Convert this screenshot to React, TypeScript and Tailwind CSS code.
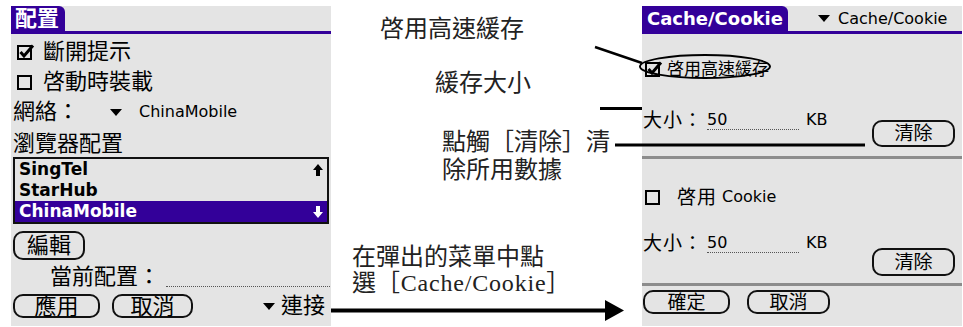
import React from 'react';

/**
 * Palm browser settings: the "配置" screen, the "Cache/Cookie" screen
 * and the callouts that explain them.
 */

const PURPLE = 'bg-[#330099]';

function CheckBox({ checked }: { checked?: boolean }) {
  return (
    <svg width="18" height="16" viewBox="0 0 18 16" className="shrink-0">
      <rect x="1" y="2" width="13" height="13" fill="none" stroke="#000" strokeWidth="2" />
      {checked && (
        <path d="M3.5 8 L7 12 L16 1.5" fill="none" stroke="#000" strokeWidth="3" />
      )}
    </svg>
  );
}

function DropArrow() {
  return (
    <svg width="12" height="7" viewBox="0 0 12 7" className="shrink-0">
      <polygon points="0,0 12,0 6,7" fill="#000" />
    </svg>
  );
}

function ScrollArrow({ down, color }: { down?: boolean; color: string }) {
  return (
    <svg
      width="10"
      height="12"
      viewBox="0 0 10 12"
      className={down ? 'rotate-180' : ''}
    >
      <polygon points="5,0 10,6 7,6 7,12 3,12 3,6 0,6" fill={color} />
    </svg>
  );
}

function PalmButton({ label, className }: { label: string; className: string }) {
  return (
    <div
      className={`flex items-center justify-center rounded-[10px] border-2 border-[#111] ${className}`}
    >
      {label}
    </div>
  );
}

function ConfigScreen() {
  const rows = [
    { name: 'SingTel', arrow: 'up' },
    { name: 'StarHub' },
    { name: 'ChinaMobile', arrow: 'down', selected: true },
  ];

  return (
    <div className="ml-[11px] mt-[6px] flex h-[320px] w-[320px] shrink-0 flex-col bg-[#e4e4e4] text-[22px] text-black">
      {/* title */}
      <div className="flex h-[28px] shrink-0 items-start border-b-[3px] border-[#330099]">
        <div
          className={`flex h-full w-[54px] items-center rounded-tr-[6px] ${PURPLE} pl-[4px] font-bold text-white`}
        >
          配置
        </div>
      </div>

      <div className="mt-[3px] flex h-[30px] items-center gap-[8px] pl-[6px]">
        <CheckBox checked />
        <span className="leading-none">斷開提示</span>
      </div>
      <div className="flex h-[30px] items-center gap-[8px] pl-[6px]">
        <CheckBox />
        <span className="leading-none">啓動時裝載</span>
      </div>
      <div className="flex h-[30px] items-center pl-[2px]">
        <span className="w-[97px] leading-none">網絡：</span>
        <DropArrow />
        <span className="ml-[17px] text-[16px] leading-none">ChinaMobile</span>
      </div>
      <div className="flex h-[30px] items-center pl-[2px] pt-[4px]">
        <span className="leading-none">瀏覽器配置</span>
      </div>

      {/* list of configurations */}
      <div className="ml-[2px] mr-[2px] border-2 border-[#111]">
        {rows.map((row) => (
          <div
            key={row.name}
            className={`flex h-[21px] items-center justify-between px-[4px] text-[17px] font-bold leading-none ${
              row.selected ? `${PURPLE} text-white` : ''
            }`}
          >
            <span>{row.name}</span>
            {row.arrow && (
              <ScrollArrow
                down={row.arrow === 'down'}
                color={row.selected ? '#fff' : '#000'}
              />
            )}
          </div>
        ))}
      </div>

      <PalmButton label="編輯" className="ml-[2px] mt-[7px] h-[29px] w-[72px]" />

      <div className="flex h-[32px] items-end pb-[3px] pl-[39px] pr-[1px]">
        <span className="leading-[24px]">當前配置：</span>
        <div className="mb-[2px] ml-[6px] flex-1 border-b border-dotted border-[#555]" />
      </div>

      <div className="mt-[2px] flex items-center pl-[2px]">
        <PalmButton label="應用" className="h-[24px] w-[87px]" />
        <PalmButton label="取消" className="ml-[12px] h-[24px] w-[81px]" />
        <div className="ml-[70px] flex items-center gap-[6px]">
          <DropArrow />
          <span className="leading-none">連接</span>
        </div>
      </div>
    </div>
  );
}

function SizeRow() {
  return (
    <div className="flex h-[22px] items-center pl-[1px]">
      <span className="text-[19px] leading-none tracking-[1px]">大小：</span>
      <div className="ml-[4px] flex h-[20px] w-[92px] items-center border-b border-dotted border-[#555] text-[16px] leading-none">
        50
      </div>
      <span className="ml-[7px] text-[16px] leading-none">KB</span>
    </div>
  );
}

function CacheScreen() {
  return (
    <div className="mt-[6px] flex h-[320px] w-[320px] shrink-0 flex-col bg-[#e4e4e4] text-black">
      {/* title with the form popup */}
      <div className="flex h-[28px] shrink-0 items-start border-b-[3px] border-[#330099]">
        <div
          className={`flex h-full w-[146px] items-center rounded-tr-[6px] ${PURPLE} pl-[5px] text-[18px] font-bold leading-none text-white`}
        >
          Cache/Cookie
        </div>
        <div className="ml-[30px] flex h-full items-center gap-[8px]">
          <DropArrow />
          <span className="text-[16px] leading-none">Cache/Cookie</span>
        </div>
      </div>

      <div className="mt-[19px] flex h-[32px] items-center gap-[4px] pl-[3px]">
        <CheckBox checked />
        <span className="text-[17px] leading-none">啓用高速緩存</span>
      </div>

      <div className="flex h-[71px] items-start">
        <div className="mt-[24px]">
          <SizeRow />
        </div>
        <PalmButton
          label="清除"
          className="ml-auto mr-[7px] mt-[35px] h-[27px] w-[83px] text-[19px]"
        />
      </div>
      <div className="h-[3px] bg-[#8c8c8c]" />

      <div className="mt-[25px] flex h-[26px] items-center pl-[3px]">
        <CheckBox />
        <span className="ml-[14px] text-[19px] leading-none tracking-[1px]">啓用</span>
        <span className="ml-[5px] text-[16px] leading-none">Cookie</span>
      </div>

      <div className="flex h-[70px] items-start">
        <div className="mt-[22px]">
          <SizeRow />
        </div>
        <PalmButton
          label="清除"
          className="ml-auto mr-[7px] mt-[38px] h-[28px] w-[83px] text-[19px]"
        />
      </div>
      <div className="mt-[3px] h-[3px] bg-[#8c8c8c]" />

      <div className="mt-[4px] flex items-center pl-[1px] text-[19px]">
        <PalmButton label="確定" className="h-[24px] w-[87px]" />
        <PalmButton label="取消" className="ml-[17px] h-[24px] w-[83px]" />
      </div>
    </div>
  );
}

function Callouts() {
  return (
    <div className="flex w-[311px] shrink-0 flex-col text-[24px] text-[#222] font-['Liberation_Serif','Noto_Sans_CJK_TC',serif]">
      <p className="mt-[15px] pl-[49px] leading-[28px]">啓用高速緩存</p>
      <p className="mt-[26px] pl-[104px] leading-[28px]">緩存大小</p>
      <p className="mt-[31px] pl-[111px] leading-[28px]">
        點觸［清除］清
        <br />
        除所用數據
      </p>
      <p className="mt-[60px] pl-[21px] leading-[26px]">
        在彈出的菜單中點
        <br />
        選<span className="tracking-[0.8px]">［Cache/Cookie］</span>
      </p>
    </div>
  );
}

export default function App() {
  return (
    <div className="relative flex h-[327px] w-[963px] items-start overflow-hidden bg-white font-['DejaVu_Sans','Noto_Sans_CJK_TC',sans-serif]">
      <ConfigScreen />
      <Callouts />
      <CacheScreen />

      {/* leader lines, ellipse and the big arrow */}
      <svg
        className="pointer-events-none absolute inset-0"
        width="963"
        height="327"
        viewBox="0 0 963 327"
      >
        <line x1="595" y1="47" x2="642" y2="63" stroke="#000" strokeWidth="2.5" />
        <ellipse cx="705" cy="66.5" rx="65" ry="11.5" fill="none" stroke="#000" strokeWidth="2" />
        <line x1="600" y1="108.5" x2="642" y2="108.5" stroke="#000" strokeWidth="3" />
        <line x1="615" y1="145" x2="865" y2="145" stroke="#000" strokeWidth="3" />
        <line x1="331" y1="310.5" x2="607" y2="310.5" stroke="#000" strokeWidth="4" />
        <polygon points="605,300 624,310.5 605,321" fill="#000" />
      </svg>
    </div>
  );
}
